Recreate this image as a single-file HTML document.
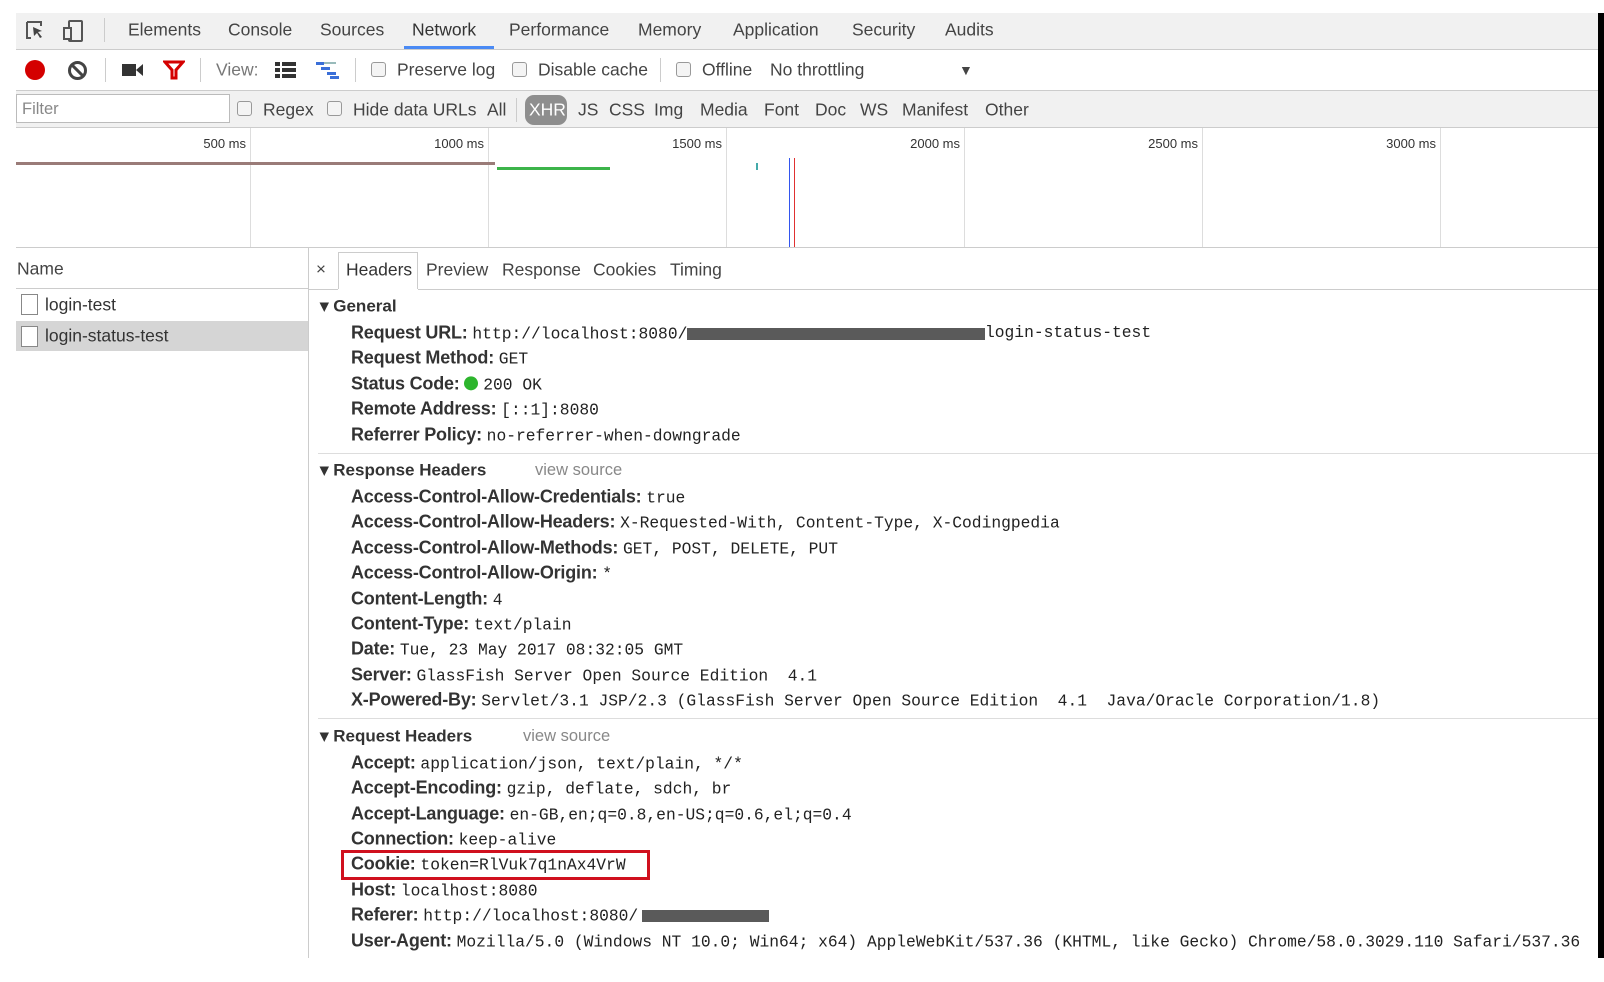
<!DOCTYPE html>
<html><head><meta charset="utf-8"><style>
*{margin:0;padding:0;box-sizing:border-box}
body{width:1604px;height:982px;background:#fff;position:relative;overflow:hidden;font-family:"Liberation Sans",sans-serif;color:#333}
.a{position:absolute}
.t{position:absolute;white-space:nowrap;transform:translateY(-50%);line-height:1}
.s{font-size:17.5px;color:#444}
.k{font-size:18px;font-weight:bold;color:#333;letter-spacing:-0.2px}
.h{font-size:17px;font-weight:bold;color:#333}
.m{font-family:"Liberation Mono",monospace;font-size:16.3px;font-weight:normal;color:#222;white-space:pre;letter-spacing:0}
.cb{position:absolute;width:15px;height:15px;border:1px solid #999;border-radius:3px;background:#f4f4f4}
.gl{position:absolute;top:128px;height:119px;width:1px;background:#ddd}
.tl{position:absolute;top:136px;font-size:13px;color:#333;text-align:right;width:80px}
</style></head><body>
<!-- tab bar -->
<div class="a" style="left:16px;top:13px;width:1582px;height:37px;background:#f1f1f1;border-bottom:1px solid #ccc"></div>
<svg class="a" style="left:24px;top:19px" width="70" height="24" viewBox="0 0 70 24"><path d="M3 3h14v4M3 3v16h4" fill="none" stroke="#555" stroke-width="2"/><path d="M9 8l9 4-4 1 4 5-2 1-3-5-3 3z" fill="#444"/><rect x="45" y="2" width="13" height="20" rx="1" fill="none" stroke="#555" stroke-width="2"/><rect x="40" y="9" width="7" height="11" fill="#f1f1f1" stroke="#555" stroke-width="2"/></svg>
<div class="a" style="left:104px;top:18px;width:1px;height:24px;background:#ccc"></div>
<div class="t s" style="left:128px;top:30px">Elements</div>
<div class="t s" style="left:228px;top:30px">Console</div>
<div class="t s" style="left:320px;top:30px">Sources</div>
<div class="t s" style="left:412px;top:30px;color:#333">Network</div>
<div class="a" style="left:404px;top:46px;width:90px;height:3px;background:#4a8af4"></div>
<div class="t s" style="left:509px;top:30px">Performance</div>
<div class="t s" style="left:638px;top:30px">Memory</div>
<div class="t s" style="left:733px;top:30px">Application</div>
<div class="t s" style="left:852px;top:30px">Security</div>
<div class="t s" style="left:945px;top:30px">Audits</div>
<!-- toolbar -->
<div class="a" style="left:16px;top:90px;width:1582px;height:1px;background:#ccc"></div>
<div class="a" style="left:25px;top:60px;width:20px;height:20px;border-radius:50%;background:#d40000"></div>
<div class="a" style="left:68px;top:61px;width:19px;height:19px;border-radius:50%;border:3px solid #444"></div>
<div class="a" style="left:70px;top:69px;width:15px;height:3px;background:#444;transform:rotate(45deg)"></div>
<div class="a" style="left:105px;top:58px;width:1px;height:24px;background:#ccc"></div>
<svg class="a" style="left:122px;top:62px" width="22" height="16"><rect x="0" y="2" width="14" height="12" fill="#333"/><path d="M14 8l7-6v12z" fill="#333"/></svg>
<svg class="a" style="left:163px;top:60px" width="22" height="20"><path d="M2 2h18l-7 8v8h-4v-8z" fill="none" stroke="#d40000" stroke-width="3"/></svg>
<div class="a" style="left:200px;top:58px;width:1px;height:24px;background:#ccc"></div>
<div class="t s" style="left:216px;top:70px;color:#777">View:</div>
<svg class="a" style="left:275px;top:62px" width="22" height="16"><rect x="0" y="0" width="5" height="4" fill="#333"/><rect x="7" y="0" width="14" height="4" fill="#333"/><rect x="0" y="6" width="5" height="4" fill="#333"/><rect x="7" y="6" width="14" height="4" fill="#333"/><rect x="0" y="12" width="5" height="4" fill="#333"/><rect x="7" y="12" width="14" height="4" fill="#333"/></svg>
<svg class="a" style="left:316px;top:61px" width="24" height="18"><rect x="0" y="1" width="8" height="3" fill="#3a6fd8"/><rect x="8" y="1" width="12" height="2" fill="#9bb"/><rect x="5" y="6" width="9" height="3" fill="#3a6fd8"/><rect x="11" y="11" width="9" height="3" fill="#3a6fd8"/><rect x="14" y="15" width="9" height="3" fill="#3a6fd8"/></svg>
<div class="a" style="left:355px;top:58px;width:1px;height:24px;background:#ccc"></div>
<div class="cb" style="left:371px;top:62px"></div>
<div class="t s" style="left:397px;top:70px">Preserve log</div>
<div class="cb" style="left:512px;top:62px"></div>
<div class="t s" style="left:538px;top:70px">Disable cache</div>
<div class="a" style="left:660px;top:58px;width:1px;height:24px;background:#ccc"></div>
<div class="cb" style="left:676px;top:62px"></div>
<div class="t s" style="left:702px;top:70px">Offline</div>
<div class="t s" style="left:770px;top:70px">No throttling</div>
<div class="t" style="left:959px;top:70px;font-size:14px;color:#444">▼</div>
<!-- filter bar -->
<div class="a" style="left:16px;top:91px;width:1582px;height:37px;background:#f1f1f1;border-bottom:1px solid #ccc"></div>
<div class="a" style="left:16px;top:94px;width:214px;height:29px;background:#fff;border:1px solid #bbb"></div>
<div class="t s" style="left:22px;top:109px;color:#888;font-size:16.5px">Filter</div>
<div class="cb" style="left:237px;top:101px"></div>
<div class="t s" style="left:263px;top:110px">Regex</div>
<div class="cb" style="left:327px;top:101px"></div>
<div class="t s" style="left:353px;top:110px">Hide data URLs</div>
<div class="t s" style="left:487px;top:110px">All</div>
<div class="a" style="left:516px;top:98px;width:1px;height:24px;background:#ccc"></div>
<div class="a" style="left:525px;top:95px;width:42px;height:30px;border-radius:9px;background:#8e8e8e"></div>
<div class="t s" style="left:529px;top:110px;color:#fff">XHR</div>
<div class="t s" style="left:578px;top:110px">JS</div>
<div class="t s" style="left:609px;top:110px">CSS</div>
<div class="t s" style="left:654px;top:110px">Img</div>
<div class="t s" style="left:700px;top:110px">Media</div>
<div class="t s" style="left:764px;top:110px">Font</div>
<div class="t s" style="left:815px;top:110px">Doc</div>
<div class="t s" style="left:860px;top:110px">WS</div>
<div class="t s" style="left:902px;top:110px">Manifest</div>
<div class="t s" style="left:985px;top:110px">Other</div>
<!-- timeline -->
<div class="gl" style="left:250px"></div><div class="gl" style="left:488px"></div><div class="gl" style="left:726px"></div><div class="gl" style="left:964px"></div><div class="gl" style="left:1202px"></div><div class="gl" style="left:1440px"></div>
<div class="tl" style="left:166px">500 ms</div><div class="tl" style="left:404px">1000 ms</div><div class="tl" style="left:642px">1500 ms</div><div class="tl" style="left:880px">2000 ms</div><div class="tl" style="left:1118px">2500 ms</div><div class="tl" style="left:1356px">3000 ms</div>
<div class="a" style="left:16px;top:162px;width:479px;height:3px;background:#9a7b78"></div>
<div class="a" style="left:497px;top:167px;width:113px;height:3px;background:#3cb44a"></div>
<div class="a" style="left:756px;top:163px;width:2px;height:7px;background:#4aa"></div>
<div class="a" style="left:789px;top:158px;width:1px;height:89px;background:#3355ee"></div>
<div class="a" style="left:794px;top:158px;width:1px;height:89px;background:#e03030"></div>
<div class="a" style="left:16px;top:247px;width:1582px;height:1px;background:#ccc"></div>
<!-- left panel -->
<div class="a" style="left:308px;top:248px;width:1px;height:710px;background:#ccc"></div>
<div class="t s" style="left:17px;top:269px">Name</div>
<div class="a" style="left:16px;top:288px;width:292px;height:1px;background:#ccc"></div>
<div class="a" style="left:16px;top:321px;width:292px;height:30px;background:#d5d5d5"></div>
<div class="a" style="left:21px;top:294px;width:17px;height:21px;border:1px solid #888;background:#fff"></div>
<div class="t s" style="left:45px;top:305px;color:#333">login-test</div>
<div class="a" style="left:21px;top:326px;width:17px;height:21px;border:1px solid #888;background:#fff"></div>
<div class="t s" style="left:45px;top:336px;color:#333">login-status-test</div>
<!-- right tabs -->
<div class="t" style="left:316px;top:269px;font-size:17px;color:#444">×</div>
<div class="a" style="left:338px;top:252px;width:80px;height:38px;border:1px solid #ccc;border-bottom:none;background:#fff"></div>
<div class="t s" style="left:346px;top:270px;color:#333">Headers</div>
<div class="t s" style="left:426px;top:270px">Preview</div>
<div class="t s" style="left:502px;top:270px">Response</div>
<div class="t s" style="left:593px;top:270px">Cookies</div>
<div class="t s" style="left:670px;top:270px">Timing</div>
<div class="a" style="left:309px;top:289px;width:1289px;height:1px;background:#ccc"></div>
<div class="a" style="left:338px;top:289px;width:80px;height:1px;background:#fff"></div>
<!-- General -->
<div class="t h" style="left:320px;top:306px">▾ General</div>
<div class="t k" style="left:351px;top:333px">Request URL: <span class="m">http://localhost:8080/</span></div>
<div class="a" style="left:687px;top:328px;width:298px;height:12px;background:#5a5a5a"></div>
<div class="t m" style="left:985px;top:333px">login-status-test</div>
<div class="t k" style="left:351px;top:358px">Request Method: <span class="m">GET</span></div>
<div class="t k" style="left:351px;top:384px">Status Code: <span style="display:inline-block;width:14px;height:14px;border-radius:50%;background:#2db52d;vertical-align:-1px"></span> <span class="m">200 OK</span></div>
<div class="t k" style="left:351px;top:409px">Remote Address: <span class="m">[::1]:8080</span></div>
<div class="t k" style="left:351px;top:435px">Referrer Policy: <span class="m">no-referrer-when-downgrade</span></div>
<div class="a" style="left:318px;top:453px;width:1280px;height:1px;background:#ddd"></div>
<!-- Response headers -->
<div class="t h" style="left:320px;top:470px">▾ Response Headers</div>
<div class="t s" style="left:535px;top:470px;color:#888;font-size:16.5px">view source</div>
<div class="t k" style="left:351px;top:497px">Access-Control-Allow-Credentials: <span class="m">true</span></div>
<div class="t k" style="left:351px;top:522px">Access-Control-Allow-Headers: <span class="m">X-Requested-With, Content-Type, X-Codingpedia</span></div>
<div class="t k" style="left:351px;top:548px">Access-Control-Allow-Methods: <span class="m">GET, POST, DELETE, PUT</span></div>
<div class="t k" style="left:351px;top:573px">Access-Control-Allow-Origin: <span class="m">*</span></div>
<div class="t k" style="left:351px;top:599px">Content-Length: <span class="m">4</span></div>
<div class="t k" style="left:351px;top:624px">Content-Type: <span class="m">text/plain</span></div>
<div class="t k" style="left:351px;top:649px">Date: <span class="m">Tue, 23 May 2017 08:32:05 GMT</span></div>
<div class="t k" style="left:351px;top:675px">Server: <span class="m">GlassFish Server Open Source Edition  4.1</span></div>
<div class="t k" style="left:351px;top:700px">X-Powered-By: <span class="m">Servlet/3.1 JSP/2.3 (GlassFish Server Open Source Edition  4.1  Java/Oracle Corporation/1.8)</span></div>
<div class="a" style="left:318px;top:718px;width:1280px;height:1px;background:#ddd"></div>
<!-- Request headers -->
<div class="t h" style="left:320px;top:736px">▾ Request Headers</div>
<div class="t s" style="left:523px;top:736px;color:#888;font-size:16.5px">view source</div>
<div class="t k" style="left:351px;top:763px">Accept: <span class="m">application/json, text/plain, */*</span></div>
<div class="t k" style="left:351px;top:788px">Accept-Encoding: <span class="m">gzip, deflate, sdch, br</span></div>
<div class="t k" style="left:351px;top:814px">Accept-Language: <span class="m">en-GB,en;q=0.8,en-US;q=0.6,el;q=0.4</span></div>
<div class="t k" style="left:351px;top:839px">Connection: <span class="m">keep-alive</span></div>
<div class="t k" style="left:351px;top:864px">Cookie: <span class="m">token=RlVuk7q1nAx4VrW</span></div>
<div class="a" style="left:341px;top:850px;width:309px;height:30px;border:3px solid #d0101e"></div>
<div class="t k" style="left:351px;top:890px">Host: <span class="m">localhost:8080</span></div>
<div class="t k" style="left:351px;top:915px">Referer: <span class="m">http://localhost:8080/</span></div>
<div class="a" style="left:642px;top:910px;width:127px;height:12px;background:#5a5a5a"></div>
<div class="t k" style="left:351px;top:941px">User-Agent: <span class="m">Mozilla/5.0 (Windows NT 10.0; Win64; x64) AppleWebKit/537.36 (KHTML, like Gecko) Chrome/58.0.3029.110 Safari/537.36</span></div>
<!-- right black edge -->
<div class="a" style="left:1598px;top:13px;width:6px;height:945px;background:#000"></div>
<div class="a" style="left:1598px;top:958px;width:6px;height:24px;background:#fff"></div>
</body></html>
